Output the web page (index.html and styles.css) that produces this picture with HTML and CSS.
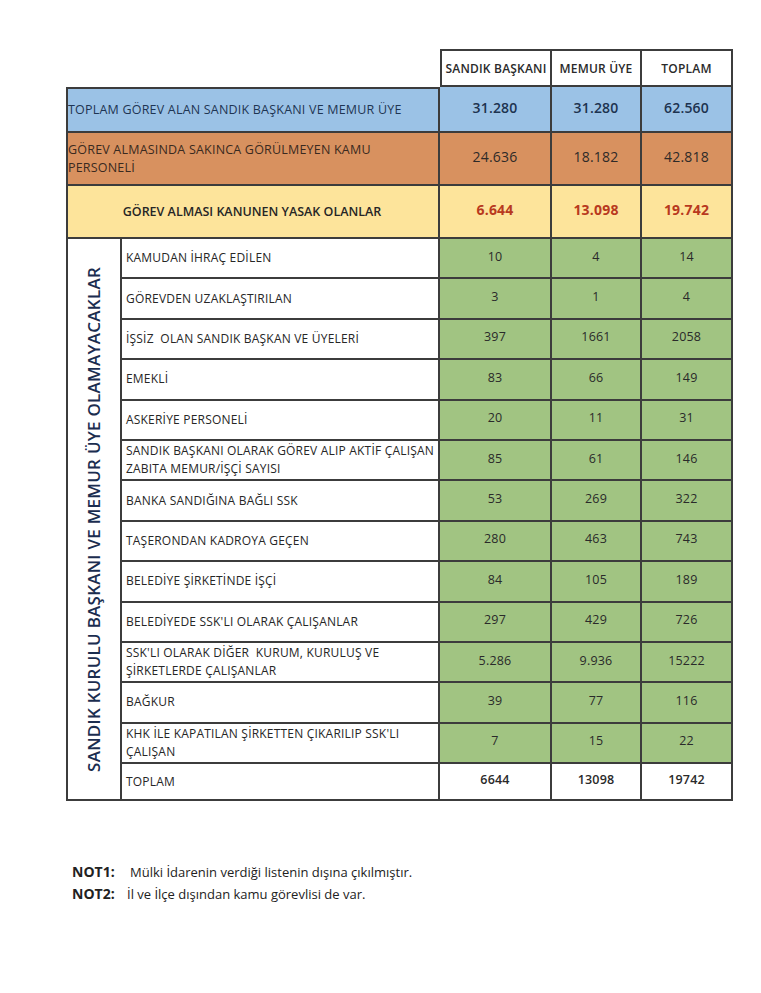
FILE: index.html
```html
<!DOCTYPE html>
<html lang="tr">
<head>
<meta charset="utf-8">
<title>Sandık Kurulu Tablosu</title>
<link rel="stylesheet" href="styles.css">
</head>
<body>
<main class="page">
  <section class="sheet">
    <div class="spacer"></div>
    <div class="cell head">SANDIK BAŞKANI</div>
    <div class="cell head">MEMUR ÜYE</div>
    <div class="cell head">TOPLAM</div>

    <div class="cell wide blue first">TOPLAM GÖREV ALAN SANDIK BAŞKANI VE MEMUR ÜYE</div>
    <div class="cell num blue strong">31.280</div>
    <div class="cell num blue strong">31.280</div>
    <div class="cell num blue strong">62.560</div>

    <div class="cell wide orange">GÖREV ALMASINDA SAKINCA GÖRÜLMEYEN KAMU<br>PERSONELİ</div>
    <div class="cell num orange big">24.636</div>
    <div class="cell num orange big">18.182</div>
    <div class="cell num orange big">42.818</div>

    <div class="cell wide yellow center">GÖREV ALMASI KANUNEN YASAK OLANLAR</div>
    <div class="cell num yellow red">6.644</div>
    <div class="cell num yellow red">13.098</div>
    <div class="cell num yellow red">19.742</div>

    <div class="cell vertical"><span>SANDIK KURULU BAŞKANI VE MEMUR ÜYE OLAMAYACAKLAR</span></div>

    <div class="cell label">KAMUDAN İHRAÇ EDİLEN</div>
    <div class="cell num green">10</div><div class="cell num green">4</div><div class="cell num green">14</div>

    <div class="cell label">GÖREVDEN UZAKLAŞTIRILAN</div>
    <div class="cell num green">3</div><div class="cell num green">1</div><div class="cell num green">4</div>

    <div class="cell label">İŞSİZ&nbsp; OLAN SANDIK BAŞKAN VE ÜYELERİ</div>
    <div class="cell num green">397</div><div class="cell num green">1661</div><div class="cell num green">2058</div>

    <div class="cell label">EMEKLİ</div>
    <div class="cell num green">83</div><div class="cell num green">66</div><div class="cell num green">149</div>

    <div class="cell label">ASKERİYE PERSONELİ</div>
    <div class="cell num green">20</div><div class="cell num green">11</div><div class="cell num green">31</div>

    <div class="cell label">SANDIK BAŞKANI OLARAK GÖREV ALIP AKTİF ÇALIŞAN<br>ZABITA MEMUR/İŞÇİ SAYISI</div>
    <div class="cell num green">85</div><div class="cell num green">61</div><div class="cell num green">146</div>

    <div class="cell label">BANKA SANDIĞINA BAĞLI SSK</div>
    <div class="cell num green">53</div><div class="cell num green">269</div><div class="cell num green">322</div>

    <div class="cell label">TAŞERONDAN KADROYA GEÇEN</div>
    <div class="cell num green">280</div><div class="cell num green">463</div><div class="cell num green">743</div>

    <div class="cell label">BELEDİYE ŞİRKETİNDE İŞÇİ</div>
    <div class="cell num green">84</div><div class="cell num green">105</div><div class="cell num green">189</div>

    <div class="cell label">BELEDİYEDE SSK'LI OLARAK ÇALIŞANLAR</div>
    <div class="cell num green">297</div><div class="cell num green">429</div><div class="cell num green">726</div>

    <div class="cell label">SSK'LI OLARAK DİĞER&nbsp; KURUM, KURULUŞ VE<br>ŞİRKETLERDE ÇALIŞANLAR</div>
    <div class="cell num green">5.286</div><div class="cell num green">9.936</div><div class="cell num green">15222</div>

    <div class="cell label">BAĞKUR</div>
    <div class="cell num green">39</div><div class="cell num green">77</div><div class="cell num green">116</div>

    <div class="cell label">KHK İLE KAPATILAN ŞİRKETTEN ÇIKARILIP SSK'LI<br>ÇALIŞAN</div>
    <div class="cell num green">7</div><div class="cell num green">15</div><div class="cell num green">22</div>

    <div class="cell label">TOPLAM</div>
    <div class="cell num total">6644</div><div class="cell num total">13098</div><div class="cell num total">19742</div>
  </section>

  <section class="notes">
    <div class="note-key">NOT1:</div>
    <div class="note-text">Mülki İdarenin verdiği listenin dışına çıkılmıştır.</div>
    <div class="note-key">NOT2:</div>
    <div class="note-text second">İl ve İlçe dışından kamu görevlisi de var.</div>
  </section>
</main>
</body>
</html>
```

FILE: styles.css
```css
* { box-sizing: border-box; }

html, body {
  margin: 0;
  background: #ffffff;
}

body {
  font-family: "Open Sans", "Noto Sans", sans-serif;
  color: #262626;
}

.page {
  padding: 49px 0 0 66px;
}

.sheet {
  display: grid;
  grid-template-columns: 56px 318px 112px 90px 91px;
  grid-template-rows: 38px 46px 53px 53px repeat(13, 40.4px) 37px;
  width: 667px;
}

.spacer {
  grid-column: 1 / 3;
}

.cell {
  border-right: 2px solid #3c3c3c;
  border-bottom: 2px solid #3c3c3c;
  display: flex;
  align-items: center;
  font-size: 12px;
  line-height: 18px;
  letter-spacing: 0.2px;
}

.head {
  border-top: 2px solid #3c3c3c;
  justify-content: center;
  font-weight: 600;
  color: #2a2a2a;
  padding-top: 2px;
}

.spacer + .head {
  border-left: 2px solid #3c3c3c;
}

.wide {
  grid-column: 1 / 3;
  border-left: 2px solid #3c3c3c;
  padding-left: 0;
  font-size: 12.5px;
}

.wide.first {
  border-top: 2px solid #3c3c3c;
}

.blue { background: #9bc2e6; color: #1e3553; }
.orange { background: #d8915f; color: #3a2a20; }
.yellow { background: #fde49b; }
.green { background: #a1c482; }

.center {
  justify-content: center;
  font-weight: 600;
  letter-spacing: 0;
  padding-right: 2px;
}

.num {
  justify-content: center;
  font-size: 12.5px;
  padding-bottom: 3px;
  color: #2a2a2a;
}

.strong {
  font-size: 14px;
  font-weight: 600;
  color: #1d3350;
}

.big {
  font-size: 14px;
  color: #2e2a28;
}

.red {
  font-size: 14px;
  font-weight: 700;
  color: #b8391e;
}

.total {
  font-weight: 600;
}

.vertical {
  grid-row: span 14;
  border-left: 2px solid #3c3c3c;
  justify-content: center;
}

.vertical span {
  writing-mode: vertical-rl;
  transform: rotate(180deg);
  font-size: 17px;
  font-weight: 600;
  letter-spacing: 0.25px;
  color: #1b2d4f;
  white-space: nowrap;
}

.label {
  padding-left: 4px;
  color: #262626;
}

.notes {
  display: grid;
  grid-template-columns: 58px auto;
  margin-top: 60px;
  padding-left: 6px;
  font-size: 13px;
  line-height: 22px;
  color: #222;
}

.note-key {
  font-size: 14px;
  font-weight: 700;
}

.note-text.second {
  margin-left: -3px;
}
```
